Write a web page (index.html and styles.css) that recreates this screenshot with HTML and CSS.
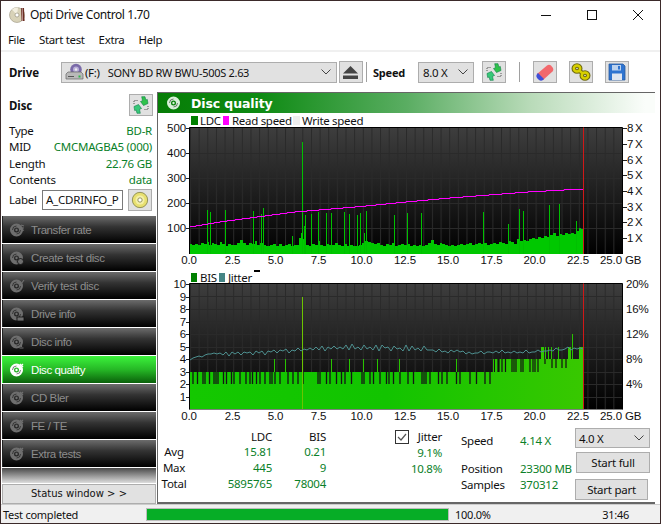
FILE: index.html
```html
<!DOCTYPE html>
<html lang="en">
<head>
<meta charset="utf-8">
<title>Opti Drive Control 1.70</title>
<link rel="stylesheet" href="styles.css">
</head>
<body>
<svg class="defs" width="0" height="0" aria-hidden="true">
  <defs>
    <symbol id="disc" viewBox="0 0 16 16">
      <path fill="currentColor" fill-rule="evenodd" d="M7.500 1.500a6.500 6.500 0 1 0 0 13 6.500 6.500 0 0 0 0-13zm0 4a2.500 2.500 0 1 1 0 5 2.500 2.500 0 0 1 0-5z"/>
      <circle cx="7.500" cy="8" r="1.200" fill="currentColor"/>
      <path fill="none" stroke="#000" stroke-opacity=".5" stroke-width="1" d="M3.500 8a4 4 0 0 1 4-4M11.500 8a4 4 0 0 1-4 4"/>
    </symbol>
    <symbol id="arrows" viewBox="0 0 20 20">
      <path fill="#37c878" stroke="#0e7f48" stroke-width=".6" d="M3 11.500l4.500-2 3 4-2 .8.8 4H6l-.8-3.300-1.500.6z"/>
      <path fill="#2fc24a" stroke="#0e7f48" stroke-width=".6" d="M17 8.500l-4.500 2-3-4 2-.8-.8-4H14l.8 3.300 1.500-.6z"/>
      <path fill="none" stroke="#555" stroke-width="1" stroke-dasharray="1 1" d="M3 9V5.500h4M17 11v3.500h-4"/>
    </symbol>
    <symbol id="cddisc" viewBox="0 0 20 20">
      <circle cx="10" cy="10" r="8.500" fill="#e8e070" stroke="#8a8a50"/>
      <circle cx="10" cy="10" r="5" fill="#f4f0a8"/>
      <circle cx="10" cy="10" r="2.400" fill="#fff" stroke="#8a8a50"/>
    </symbol>
  </defs>
</svg>

<div class="window">
  <header class="titlebar">
    <svg class="app-icon" width="17" height="17" viewBox="0 0 17 17"><circle cx="8" cy="9" r="7.500" fill="#d8d2b8" stroke="#9a9480" stroke-width=".6"/><path fill="#f3efe0" d="M8 9L3 3.400A7.500 7.500 0 0 1 9 1.600z"/><circle cx="8" cy="9" r="2" fill="#fff" stroke="#8a8470" stroke-width=".6"/><path fill="#6a2e22" d="M12 2h3l.6 13h-3z"/><path fill="#caa" d="M12.800 2h.8l.4 13h-.8z"/></svg>
    <span class="title-text">Opti Drive Control 1.70</span>
    <div class="win-controls">
      <svg width="12" height="12" viewBox="0 0 12 12"><path d="M1 6.500h10" stroke="#111" stroke-width="1"/></svg>
      <svg width="12" height="12" viewBox="0 0 12 12"><rect x="1.500" y="1.500" width="9" height="9" fill="none" stroke="#111"/></svg>
      <svg width="12" height="12" viewBox="0 0 12 12"><path d="M1 1l10 10M11 1L1 11" stroke="#111" stroke-width="1"/></svg>
    </div>
  </header>

  <nav class="menubar">
    <span>File</span><span>Start test</span><span>Extra</span><span>Help</span>
  </nav>

  <div class="toolbar">
    <b class="tb-label">Drive</b>
    <div class="combo drive-combo">
      <svg class="drive-icon" width="19" height="18" viewBox="0 0 19 18"><circle cx="11" cy="6.500" r="5.800" fill="#7a6aa8"/><circle cx="11" cy="6.500" r="3" fill="#b8aed8"/><circle cx="11" cy="6.500" r="1.200" fill="#eee"/><path d="M1 11l2-2h13l2 2v5H1z" fill="#b9b9b9" stroke="#666" stroke-width=".7"/><path d="M3 13.500h6" stroke="#555"/><rect x="13.500" y="12.500" width="2" height="2" fill="#2cb84a"/></svg>
      <span class="drive-letter">(F:)</span>
      <span class="drive-name">SONY BD RW BWU-500S 2.63</span>
      <svg class="chev" width="10" height="6" viewBox="0 0 10 6"><path d="M.5.500L5 5 9.500.500" fill="none" stroke="#444"/></svg>
    </div>
    <button class="tool eject" type="button" aria-label="Eject"><svg width="17" height="15" viewBox="0 0 17 15"><path d="M8.500 1L16 8.500H1z" fill="#444"/><path d="M1 10.500h15v3.500H1z" fill="#444"/></svg></button>
    <i class="tb-sep sep-a"></i>
    <b class="tb-label speed-label">Speed</b>
    <div class="combo speed-combo"><span>8.0 X</span><svg class="chev" width="10" height="6" viewBox="0 0 10 6"><path d="M.5.500L5 5 9.500.500" fill="none" stroke="#444"/></svg></div>
    <button class="tool refresh" type="button" aria-label="Refresh"><svg width="20" height="20"><use href="#arrows"/></svg></button>
    <i class="tb-sep sep-b"></i>
    <button class="tool erase" type="button" aria-label="Erase"><svg width="20" height="20" viewBox="0 0 20 20"><path d="M2 12L12 3.500q2-1.500 4 0l2 2.500q1 2-.5 3.500L8 18z" fill="#f2686c"/><path d="M2 12q-1.500 2 0 4l2 2q2 1.500 4 0l1-1-6-6z" fill="#3f4fd8"/></svg></button>
    <button class="tool chain" type="button" aria-label="Options"><svg width="20" height="20" viewBox="0 0 20 20"><g fill="none" stroke="#6f6a10" stroke-width="4.600"><ellipse cx="6" cy="6.500" rx="3.200" ry="3"/><ellipse cx="14" cy="13.500" rx="3.200" ry="3"/><path d="M8 8.500l4 3"/></g><g fill="none" stroke="#d8d000" stroke-width="2.400"><ellipse cx="6" cy="6.500" rx="3.200" ry="3"/><ellipse cx="14" cy="13.500" rx="3.200" ry="3"/><path d="M8 8.500l4 3"/></g></svg></button>
    <button class="tool save" type="button" aria-label="Save"><svg width="18" height="18" viewBox="0 0 18 18"><path d="M1 1h14l2 2v14H1z" fill="#2f74d0" stroke="#2a5aa0" stroke-width=".8"/><rect x="4" y="2" width="9" height="5.500" fill="#bcd2ee"/><rect x="4" y="10.500" width="10" height="6.500" fill="#dfe6f0"/><rect x="10" y="3" width="2" height="3.500" fill="#2f74d0"/></svg></button>
  </div>

  <div class="main">
    <aside class="sidebar">
      <div class="disc-head">
        <b>Disc</b>
        <button class="tool side-tool" type="button" aria-label="Refresh disc"><svg width="20" height="20"><use href="#arrows"/></svg></button>
      </div>
      <dl class="disc-info">
        <div><dt>Type</dt><dd>BD-R</dd></div>
        <div><dt>MID</dt><dd>CMCMAGBA5 (000)</dd></div>
        <div><dt>Length</dt><dd>22.76 GB</dd></div>
        <div><dt>Contents</dt><dd>data</dd></div>
      </dl>
      <div class="label-row">
        <span>Label</span>
        <div class="label-input">A_CDRINFO_P</div>
        <button class="tool side-tool" type="button" aria-label="Disc label"><svg width="18" height="18"><use href="#cddisc"/></svg></button>
      </div>
      <ul class="nav">
        <li><svg width="16" height="16"><use href="#disc"/><path class="ov" d="M12 3l3 1M12 6l3 0M12 9l3-1"/></svg>Transfer rate</li>
        <li><svg width="16" height="16"><use href="#disc"/><circle class="ovf" cx="11.500" cy="11.500" r="3"/></svg>Create test disc</li>
        <li><svg width="16" height="16"><use href="#disc"/><path class="ov" d="M10 3l2 3 3-4"/></svg>Verify test disc</li>
        <li><svg width="16" height="16"><use href="#disc"/><rect class="ovf" x="8" y="11" width="7" height="4"/></svg>Drive info</li>
        <li><svg width="16" height="16"><use href="#disc"/><path class="ov" d="M12.500 5v8M10.500 14h4"/></svg>Disc info</li>
        <li class="active"><svg width="16" height="16"><use href="#disc"/><path class="ov" d="M11 2l3 3M14 2l-3 3"/></svg>Disc quality</li>
        <li><svg width="16" height="16"><use href="#disc"/><path class="ov" d="M11 2l3 3M14 2l-3 3"/></svg>CD Bler</li>
        <li><svg width="16" height="16"><use href="#disc"/><path class="ov" d="M11 2l3 3M14 2l-3 3"/></svg>FE / TE</li>
        <li><svg width="16" height="16"><use href="#disc"/><path class="ov" d="M11 2l3 3M14 2l-3 3"/></svg>Extra tests</li>
      </ul>
      <div class="nav-fade"></div>
      <button class="status-btn" type="button">Status window &gt; &gt;</button>
    </aside>

    <section class="content">
      <h1 class="panel-title"><svg width="16" height="16"><use href="#disc"/></svg>Disc quality</h1>

      <svg class="chart chart-top" viewBox="158 113 497 155" width="497" height="155">
        <defs>
          <linearGradient id="bg1" x1="0" y1="0" x2="0" y2="1"><stop offset="0" stop-color="#3e3e3e"/><stop offset="1" stop-color="#000"/></linearGradient>
          <pattern id="vg1" x="190" y="0" width="8.64" height="400" patternUnits="userSpaceOnUse"><rect width="1" height="400" fill="#2a2a2a"/></pattern>
        </defs>
        <rect class="sw-ldc" x="191" y="116" width="7" height="9"/><text class="legend" x="200" y="125">LDC</text>
        <rect class="sw-read" x="223" y="116" width="6" height="9"/><text class="legend" x="232" y="125">Read speed</text>
        <rect class="sw-write" x="293" y="116" width="7" height="9"/><text class="legend" x="302" y="125">Write speed</text>

        <rect x="189.500" y="127.500" width="433" height="126.500" fill="url(#bg1)"/>
        <rect x="190" y="128" width="432" height="126" fill="url(#vg1)"/>
        <path class="hgrid" d="M190 153.500H622M190 178.500H622M190 203.500H622M190 228.500H622"/>
        <path class="frame" d="M622.500 254V127.500H189.500V254"/>
        <path class="tick" d="M186 128.500H189M186 153.500H189M186 178.500H189M186 203.500H189M186 228.500H189M623 128.500H627M623 144.500H627M623 160.500H627M623 175.500H627M623 191.500H627M623 207.500H627M623 222.500H627M623 238.500H627"/>

        <path class="ldc-fill" d="M190 254V244H192V245H195V244H198V245H201V243H204V244H207V242H209V245H212V243H214V244H217V245H220V242H222V244H225V246H228V244H231V245H234V245H237V243H240V240H243V243H246V245H249V243H252V244H255V241H257V245H260V243H263V245H266V246H270V245H273V244H276V246H279V244H282V246H285V245H288V244H291V246H294V245H297V245H299V238H301V233H303V239H306V245H309V246H312V244H315V245H318V241H320V245H323V246H326V244H329V245H332V245H335V243H338V245H341V246H344V244H347V246H350V245H353V246H356V246H359V245H362V243H365V241H368V242H371V243H374V244H377V243H380V245H383V246H386V244H389V245H392V243H395V246H398V245H401V244H404V245H407V244H410V246H413V245H416V246H419V245H422V246H425V245H428V243H431V240H434V244H437V245H440V243H442V244H445V245H448V246H451V245H454V246H457V245H460V244H463V245H466V244H469V243H472V245H475V244H478V243H481V244H484V243H487V245H490V244H493V243H496V244H499V242H502V243H505V244H508V241H511V242H514V244H517V239H520V241H523V240H526V241H529V239H532V238H535V239H538V237H541V238H544V236H547V237H550V235H553V233H556V236H559V234H562V235H565V233H568V234H571V233H574V234H577V231H579V228H581V229H583.500V254Z"/>
        <path class="ldc-spike" d="M207.500 254V210M210.500 254V212M225.500 254V210M253.500 254V211M261.500 254V214M263.500 254V208M292.500 254V236M302.500 254V142M304.500 254V226M305.500 254V215M311.500 254V214M318.500 254V212M326.500 254V213M331.500 254V213M344.500 254V212M349.500 254V214M357.500 254V215M360.500 254V213M364.500 254V233M366.500 254V211M394.500 254V215M407.500 254V213M421.500 254V213M483.500 254V212M508.500 254V224M519.500 254V209M523.500 254V211M549.500 254V205M559.500 254V204M576.500 254V221"/>
        <path class="read-line" d="M190 226.500H196V225.500H202V224.500H208V223.500H214V222.500H220V221.500H227V220.500H235V219.500H242V218.500H250V217.500H257V216.500H265V215.500H272V214.500H280V213.500H287V212.500H295V211.500H307V210.500H319V209.500H331V208.500H343V207.500H355V206.500H366V205.500H376V204.500H386V203.500H396V202.500H406V201.500H417V200.500H428V199.500H439V198.500H450V197.500H463V196.500H476V195.500H489V194.500H502V193.500H515V192.500H528V191.500H546V190.500H564V189.500H583"/>
        <path class="marker" d="M583.500 127.500V254"/>

        <g class="axis">
          <text class="end" x="186" y="132">500</text><text class="end" x="186" y="157">400</text><text class="end" x="186" y="182">300</text><text class="end" x="186" y="207">200</text><text class="end" x="186" y="232">100</text>
          <text class="sp" x="627" y="132">8 X</text><text class="sp" x="627" y="148">7 X</text><text class="sp" x="627" y="164">6 X</text><text class="sp" x="627" y="179">5 X</text><text class="sp" x="627" y="195">4 X</text><text class="sp" x="627" y="211">3 X</text><text class="sp" x="627" y="226">2 X</text><text class="sp" x="627" y="242">1 X</text>
          <text class="mid" x="189" y="264">0.0</text><text class="mid" x="232.500" y="264">2.5</text><text class="mid" x="275.500" y="264">5.0</text><text class="mid" x="318.500" y="264">7.5</text><text class="mid" x="361.500" y="264">10.0</text><text class="mid" x="405" y="264">12.5</text><text class="mid" x="448" y="264">15.0</text><text class="mid" x="491.500" y="264">17.5</text><text class="mid" x="534.500" y="264">20.0</text><text class="mid" x="578" y="264">22.5</text><text class="end" x="622" y="264">25.0</text><text x="625" y="264">GB</text>
        </g>
      </svg>

      <svg class="chart chart-bottom" viewBox="158 268 497 156" width="497" height="156">
        <defs>
          <linearGradient id="bg2" x1="0" y1="0" x2="0" y2="1"><stop offset="0" stop-color="#3e3e3e"/><stop offset="1" stop-color="#000"/></linearGradient>
          <linearGradient id="bisfill" gradientUnits="userSpaceOnUse" x1="190" y1="0" x2="583" y2="0"><stop offset="0" stop-color="#14c800"/><stop offset=".5" stop-color="#12c400"/><stop offset="1" stop-color="#38c800"/></linearGradient>
          <pattern id="vg2" x="190" y="0" width="8.64" height="500" patternUnits="userSpaceOnUse"><rect width="1" height="500" fill="#2a2a2a"/></pattern>
        </defs>
        <rect class="sw-ldc" x="191" y="273" width="6" height="9"/><text class="legend" x="200" y="282">BIS</text>
        <rect class="sw-jitter" x="219" y="273" width="6" height="9"/><text class="legend" x="228" y="282">Jitter</text>
        <rect x="254" y="270" width="6" height="2" fill="#000"/>

        <rect x="189.500" y="283.500" width="433" height="126" fill="url(#bg2)"/>
        <rect x="190" y="284" width="432" height="125" fill="url(#vg2)"/>
        <path class="hgrid" d="M190 296.500H622M190 309.500H622M190 321.500H622M190 334.500H622M190 347.500H622M190 359.500H622M190 372.500H622M190 384.500H622M190 397.500H622"/>
        <path class="frame" d="M622.500 409.500V283.500H189.500V409.500"/>
        <path class="tick" d="M186 284.500H189M186 297.500H189M186 309.500H189M186 322.500H189M186 334.500H189M186 347.500H189M186 359.500H189M186 372.500H189M186 384.500H189M186 397.500H189"/>

        <path fill="url(#bisfill)" d="M190 409V372H495V359H541V347H544V359H568V347H571V359H579V347H583.500V409Z"/>
        <path class="bis-gap" d="M193 372V384M197.500 372V384M203 372V384M205 372V384M209.500 372V384M214 372V384M216 372V384M218 372V384M223.500 372V384M226.500 372V384M231.500 372V384M234 372V384M240 372V384M246 372V384M250 372V384M252.500 372V384M256.500 372V384M260 372V384M265 372V384M270 372V384M272 372V384M275 372V384M280 372V384M288 372V384M293 372V384M298 372V384M303 372V384M318 372V384M320 372V384M326.500 372V384M330 372V384M336.500 372V384M341.500 372V384M345 372V384M351.500 372V384M362 372V384M364 372V384M370 372V384M373.500 372V384M380 372V384M386.500 372V384M389 372V384M393.500 372V384M400 372V384M408 372V384M413.500 372V384M422 372V384M424 372V384M426 372V384M430 372V384M438.500 372V384M442 372V384M447 372V384M456.500 372V384M460 372V384M470 372V384M476.500 372V384M485 372V384M490 372V384"/>
        <path class="bis-tick" d="M274.500 372V359M285.500 372V359M331.500 372V359M349.500 372V359M363.500 372V359M377.500 372V359M399.500 372V359M456.500 372V359M493.500 372V359M503.500 372V359M508.500 372V359M518.500 372V359M525.500 372V359M528.500 372V359M545.500 359V347M548.500 359V347M551.500 359V347M558.500 359V347M572.500 359V334"/>
        <path class="bis-spike" d="M302.500 409V297"/>
        <path class="bis-black" d="M498 359V372M499 359V372M502 359V372M505.500 359V372M512 359V372M514 359V372M516 359V372M521 359V372M523 359V372M530 359V372M533 359V372M535 359V372M538 359V372M545 359V364M552 359V368M556 359V368M562 359V368M566 359V368"/>
        <path class="jitter-line" d="M190 360l3-2 3-1 3-1 3 1 3-2 3-1 3 0 3-1 3 1 3-1l3 2 3-3 3 4 3-4 3 2 3-2 3 3 3-3 3 1 3-1l3 3 3-4 3 2 3-2 3 4 3-4 3 1 3-2 3 3 3-3l3 1 3-2 3 4 3-3 3 1 3-3 3 3 3-2 3 1 3-2l3 2 3-3 3 3 3-4 3 5 3-4 3 2 3-3 3 3 3-2l3 2 3-4 3 5 3-6 3 5 3-2 3 3 3-5 3 4 3-2l3 3 3-5 3 6 3-6 3 3 3-1 3 4 3-5 3 3 3-1l3 3 3-6 3 6 3-5 3 4 3-2 3 3 3-5 3 4 3 0l3 0 3 2 3-3 3 3 3-1 3 2 3-3 3 2 3-2 3 2l3-1 3 3 3-2 3 2 3-1 3 0 3-2 3 3 3-2 3 0l3 1 3-2 3 2 3-3 3 3 3-1 3 1 3-2 3 2 3-1l3 1 3-3 3 3 3-1 3 0 3-2 3 2 3-1 3 0 3-1l3 1 3-3 3 2 3 0 3-1 3-2 3 3 3-2 3 1 3-1l3 1"/>
        <path class="marker" d="M583.500 283.500V409"/>

        <g class="axis">
          <text class="end" x="186" y="288">10</text><text class="end" x="186" y="301">9</text><text class="end" x="186" y="313">8</text><text class="end" x="186" y="326">7</text><text class="end" x="186" y="338">6</text><text class="end" x="186" y="351">5</text><text class="end" x="186" y="363">4</text><text class="end" x="186" y="376">3</text><text class="end" x="186" y="388">2</text><text class="end" x="186" y="401">1</text>
          <text x="626" y="288">20%</text><text x="626" y="313">16%</text><text x="626" y="338">12%</text><text x="626" y="363">8%</text><text x="626" y="388">4%</text>
          <text class="mid" x="189" y="420">0.0</text><text class="mid" x="232.500" y="420">2.5</text><text class="mid" x="275.500" y="420">5.0</text><text class="mid" x="318.500" y="420">7.5</text><text class="mid" x="361.500" y="420">10.0</text><text class="mid" x="405" y="420">12.5</text><text class="mid" x="448" y="420">15.0</text><text class="mid" x="491.500" y="420">17.5</text><text class="mid" x="534.500" y="420">20.0</text><text class="mid" x="578" y="420">22.5</text><text class="end" x="622" y="420">25.0</text><text x="625" y="420">GB</text>
        </g>
      </svg>

      <div class="stats">
        <div class="stat-table">
          <span></span><span class="head">LDC</span><span class="head">BIS</span>
          <span class="lab">Avg</span><span class="val">15.81</span><span class="val">0.21</span>
          <span class="lab">Max</span><span class="val">445</span><span class="val">9</span>
          <span class="lab">Total</span><span class="val">5895765</span><span class="val">78004</span>
        </div>
        <div class="jitter-col">
          <div class="jitter-head"><svg class="check" width="14" height="14" viewBox="0 0 14 14"><rect x=".5" y=".5" width="13" height="13" fill="#fff" stroke="#333"/><path d="M3 7l3 3 5-6" fill="none" stroke="#555" stroke-width="1.200"/></svg><span>Jitter</span></div>
          <div class="val">9.1%</div>
          <div class="val">10.8%</div>
        </div>
        <div class="pos-col">
          <div class="pos-row pos-speed"><span>Speed</span><span class="green">4.14 X</span></div>
          <div class="pos-row"><span>Position</span><span class="green">23300 MB</span></div>
          <div class="pos-row"><span>Samples</span><span class="green">370312</span></div>
        </div>
        <div class="actions">
          <div class="combo action-combo"><span>4.0 X</span><svg class="chev" width="10" height="6" viewBox="0 0 10 6"><path d="M.5.500L5 5 9.500.500" fill="none" stroke="#444"/></svg></div>
          <button class="act-btn full" type="button">Start full</button>
          <button class="act-btn part" type="button">Start part</button>
        </div>
      </div>
    </section>
  </div>

  <footer class="statusbar">
    <span class="st-msg">Test completed</span>
    <div class="progress"><div class="progress-fill"></div></div>
    <span class="st-pct">100.0%</span>
    <span class="st-time">31:46</span>
  </footer>
</div>
</body>
</html>
```
FILE: styles.css
```css
* { box-sizing: border-box; }
html, body { margin: 0; padding: 0; }
body { width: 661px; height: 524px; overflow: hidden; background: #fff; font-family: "Noto Sans", "Open Sans", sans-serif; font-size: 11.5px; letter-spacing: -.25px; color: #111; }
.defs { position: absolute; }
.window { width: 661px; height: 524px; border: 1px solid #3b2a2a; background: #fff; display: flex; flex-direction: column; }

.titlebar { height: 27px; display: flex; align-items: center; padding-left: 8px; flex: none; }
.app-icon { flex: none; }
.title-text { margin-left: 4px; font-size: 12px; letter-spacing: -.4px; }
.win-controls { margin-left: auto; display: flex; gap: 34px; padding-right: 16px; }

.menubar { height: 22px; flex: none; display: flex; align-items: center; gap: 14px; padding-left: 7px; font-size: 11.5px; letter-spacing: -.35px; }
.toolbar { height: 42px; flex: none; display: flex; align-items: center; padding: 0 0 0 8px; border-top: 2px solid #f0f0f0; }
.tb-label { font-size: 11.5px; letter-spacing: -.1px; }
.speed-label { font-size: 11px; letter-spacing: -.2px; }

.combo { height: 21px; display: flex; align-items: center; background: #e1e1e1; border: 1px solid #adadad; font-size: 11.5px; letter-spacing: -.3px; }
.chev { margin-left: auto; margin-right: 5px; flex: none; }
.drive-combo { width: 276px; margin-left: 22px; padding-left: 3px; }
.drive-icon { flex: none; }
.drive-letter { margin-left: 1px; }
.drive-name { margin-left: 8px; font-size: 11px; letter-spacing: -.3px; }
.tool { width: 24px; height: 22px; padding: 0; display: flex; align-items: center; justify-content: center; background: #e1e1e1; border: 1px solid #adadad; flex: none; }
.eject { margin-left: 2px; }
.tb-sep { width: 1px; height: 20px; background: #a0a0a0; flex: none; }
.sep-a { margin-left: 3px; }
.speed-label { margin-left: 6px; }
.speed-combo { width: 56px; margin-left: 13px; padding-left: 4px; }
.refresh { margin-left: 8px; }
.sep-b { margin-left: 13px; }
.erase { margin-left: 13px; }
.chain { margin-left: 12px; }
.save { margin-left: 12px; }

.main { height: 412px; flex: none; display: flex; }
.sidebar { width: 156px; flex: none; display: flex; flex-direction: column; }
.disc-head { height: 26px; display: flex; align-items: center; justify-content: space-between; padding: 0 4px 0 8px; font-size: 11.5px; }
.disc-head b { letter-spacing: -.1px; }
.disc-info { margin: 5px 0 0; padding: 0 5px 0 8px; }
.disc-info div { display: flex; justify-content: space-between; height: 16.4px; line-height: 16px; }
.disc-info dt { margin: 0; }
.disc-info dd { margin: 0; color: #0a8028; }
.label-row { height: 22px; display: flex; align-items: center; padding-left: 8px; }
.label-input { width: 81px; height: 20px; margin-left: 5px; border: 1px solid #7a7a7a; line-height: 18px; text-align: center; font-size: 11.5px; letter-spacing: -.2px; }
.label-row .side-tool { margin-left: 5px; height: 22px; }
.nav { list-style: none; margin: 5px 0 0; padding: 0 0 0 1px; }
.nav li { width: 154px; height: 27px; margin-bottom: 1px; display: flex; align-items: center; padding: 1px 0 0 6px; gap: 6px; color: #8c8c8c; font-family: "Liberation Sans", sans-serif; font-size: 11.5px; letter-spacing: -.4px; background: linear-gradient(#6c6c6c, #333 40%, #000); border-left: 1px solid #222; }
.nav li svg { color: #6e6e6e; flex: none; }
.ov { fill: none; stroke: currentColor; stroke-width: 1.200; }
.ovf { fill: currentColor; stroke: #111; stroke-width: .8; }
.nav li.active { color: #fff; background: linear-gradient(#3cf33c, #26b826 50%, #0a600a); border-left-color: #3cf33c; }
.nav li.active svg { color: #fff; }
.nav-fade { height: 15px; margin-left: 1px; width: 154px; background: linear-gradient(#4a4a4a, #ddd); flex: none; }
.status-btn { width: 154px; height: 20px; margin: 1px 0 0 1px; background: #e1e1e1; border: 1px solid #adadad; font-family: "DejaVu Sans", sans-serif; font-size: 10px; letter-spacing: 0; color: #111; padding: 0; flex: none; }

.content { width: 498px; flex: none; border-top: 1px solid #666; border-left: 1px solid #666; border-bottom: 2px solid #666; display: flex; flex-direction: column; height: 412px; }
.panel-title { margin: 0; height: 20px; flex: none; display: flex; align-items: center; gap: 9px; padding-left: 8px; color: #fff; font-family: "DejaVu Sans", sans-serif; font-size: 12.5px; font-weight: bold; letter-spacing: -.1px; background: linear-gradient(90deg, #067d06, #0d8a12 20%, #5aad62 50%, #b9dbb9 75%, #fafdfa 98%); }
.panel-title svg { color: #d8f0d8; flex: none; }

.chart { display: block; flex: none; }
.legend { font-size: 11.5px; fill: #111; font-family: "Noto Sans", sans-serif; letter-spacing: -.3px; }
.sw-ldc { fill: #008000; }
.sw-read { fill: #ff00ff; }
.sw-write { fill: #eee; }
.sw-jitter { fill: #458585; }
.hgrid { stroke: #2a2a2a; stroke-width: 1; fill: none; }
.frame { stroke: #000; stroke-width: 1; fill: none; }
.tick { stroke: #222; stroke-width: 1; fill: none; }
.ldc-fill { fill: #00c800; }
.ldc-spike { stroke: #00c000; stroke-width: 1; fill: none; }
.read-line { stroke: #ff00ff; stroke-width: 1; fill: none; }
.marker { stroke: #d01818; stroke-width: 1; fill: none; }
.axis text { font-family: "Liberation Sans", sans-serif; font-size: 11.5px; letter-spacing: -.1px; fill: #111; }
.axis .end { text-anchor: end; }
.axis .mid { text-anchor: middle; }
.axis .sp { word-spacing: -1.5px; }
.bis-gap { stroke: #141414; stroke-width: 1.300; fill: none; }
.bis-tick { stroke: #28c400; stroke-width: 1; fill: none; }
.bis-spike { stroke: #6cc400; stroke-width: 1; fill: none; }
.bis-black { stroke: #121212; stroke-width: 1.200; fill: none; }
.jitter-line { stroke: #4d8f8f; stroke-width: 1; fill: none; }

.stats { flex: 1; display: flex; padding: 5px 0 0 3px; }
.stat-table { width: 165px; flex: none; display: grid; grid-template-columns: 26px 85px 54px; grid-template-rows: 15px; grid-auto-rows: 16px; line-height: 16px; margin-top: 0; align-content: start; }
.stat-table .lab { text-align: center; }
.stat-table .head { text-align: right; line-height: 15px; }
.stat-table .lab, .stat-table .val { position: static; }
.val { color: #0a8028; text-align: right; line-height: 16px; height: 16px; }
.jitter-col { width: 47px; margin-left: 69px; flex: none; }
.jitter-head { display: flex; justify-content: space-between; height: 16px; line-height: 16px; }
.check { margin-top: 1px; flex: none; }
.pos-col { width: 114px; margin-left: 19px; padding-top: 4px; flex: none; }
.pos-row { display: flex; height: 16px; line-height: 16px; }
.pos-row span:first-child { width: 59px; flex: none; }
.pos-speed { margin-bottom: 12px; }
.green { color: #0a8028; }
.actions { width: 75px; flex: none; margin-top: -1px; }
.action-combo { width: 75px; height: 20px; padding-left: 3px; }
.act-btn { display: block; height: 21px; padding: 0; background: #e1e1e1; border: 1px solid #adadad; font-family: "Noto Sans", sans-serif; font-size: 11.5px; letter-spacing: -.25px; color: #111; }
.full { width: 74px; margin: 4px 0 0 1px; }
.part { width: 73px; margin-top: 6px; }

.statusbar { flex: 1; display: flex; align-items: center; background: #f0f0f0; border-top: 1px solid #ccc; font-size: 11px; letter-spacing: -.25px; }
.st-msg { width: 140px; padding-left: 2px; flex: none; }
.progress { width: 303px; height: 13px; margin-left: 5px; border: 1px solid #bcbcbc; background: #e6e6e6; flex: none; }
.progress-fill { height: 100%; background: #06ad26; }
.st-pct { margin-left: 6px; flex: none; }
.st-time { margin-left: auto; margin-right: 31px; flex: none; }
```
